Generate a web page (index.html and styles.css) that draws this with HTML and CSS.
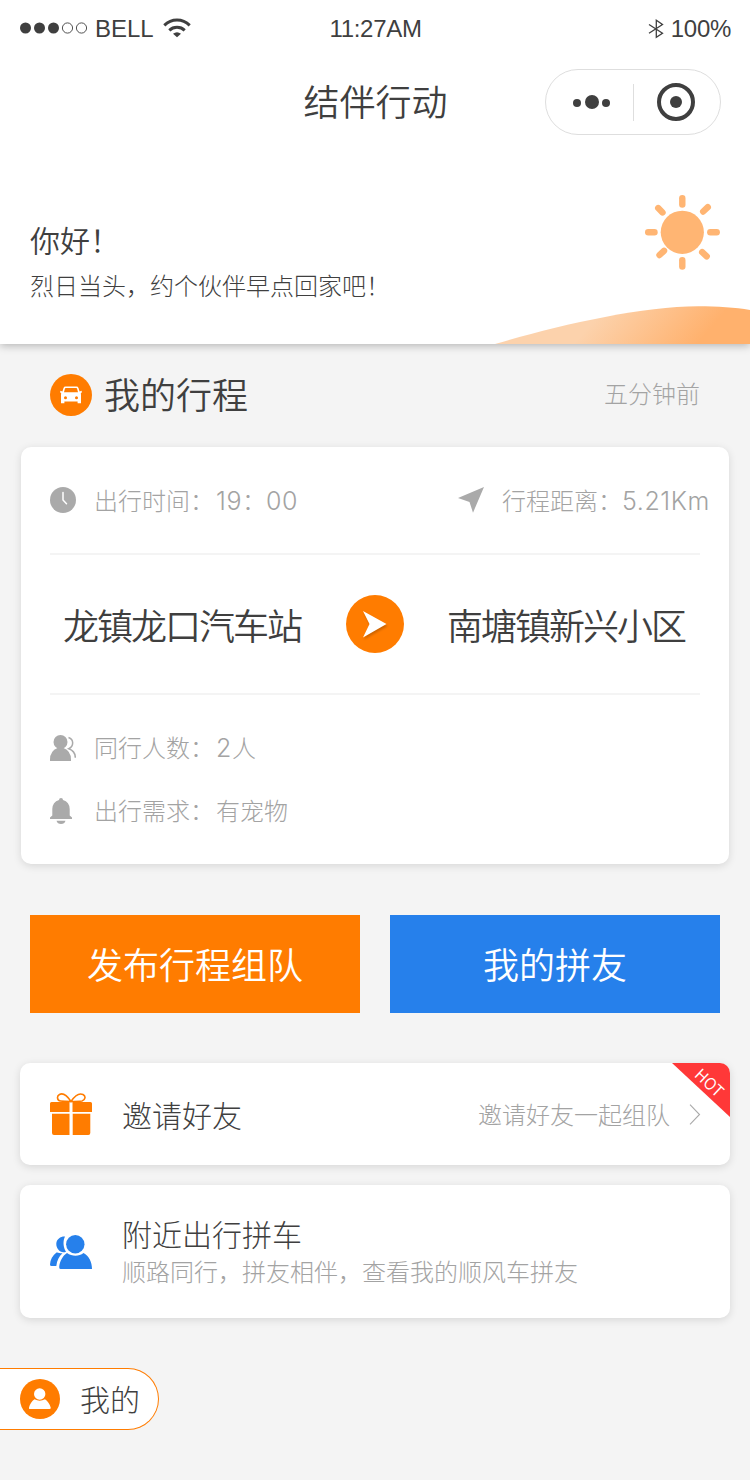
FILE: index.html
```html
<!DOCTYPE html>
<html lang="zh-CN">
<head>
  <meta charset="UTF-8">
  <meta name="viewport" content="width=device-width, initial-scale=1.0">
  <title>结伴行动</title>
  <link rel="stylesheet" href="styles.css">
</head>
<body>

  <!-- Header -->
  <header class="header">
    <div class="status">
      <div class="status-left">
        <svg class="signal" width="68" height="12" viewBox="0 0 68 12" fill="#3f3f3f">
          <circle cx="5.5" cy="6" r="5.5"/>
          <circle cx="19.5" cy="6" r="5.5"/>
          <circle cx="33.5" cy="6" r="5.5"/>
          <circle cx="47.5" cy="6" r="5.1" fill="none" stroke="#3f3f3f" stroke-width=".9"/>
          <circle cx="61.5" cy="6" r="5.1" fill="none" stroke="#3f3f3f" stroke-width=".9"/>
        </svg>
        <span class="carrier">BELL</span>
        <svg class="wifi" width="28" height="20" viewBox="0 0 28 20" fill="none" stroke="#3f3f3f" stroke-width="3">
          <path d="M1.3 7.3C8.5 .3 19.5 .3 26.7 7.3"/>
          <path d="M6.3 12.3C10.5 8.3 17.5 8.3 21.7 12.3"/>
          <path d="M10 15.7Q14 12.7 18 15.7L14 19.3Z" fill="#3f3f3f" stroke="none"/>
        </svg>
      </div>
      <span class="clock">11:27AM</span>
      <div class="status-right">
        <svg width="16" height="20" viewBox="0 0 16 20" fill="none" stroke="#3f3f3f" stroke-width="1.3">
          <path d="M1 5.5L14.5 14.2L8.3 18.3V1.3L14.5 5.5L1 14.3"/>
        </svg>
        <span>100%</span>
      </div>
    </div>

    <div class="nav">
      <h1>结伴行动</h1>
      <div class="capsule">
        <svg width="38" height="16" viewBox="0 0 38 16" fill="#3f3f3f">
          <circle cx="5" cy="9" r="4"/>
          <circle cx="20" cy="8" r="7"/>
          <circle cx="34" cy="9" r="4"/>
        </svg>
        <i class="capsule-line"></i>
        <svg width="38" height="38" viewBox="0 0 38 38">
          <circle cx="19" cy="19" r="17" fill="none" stroke="#3f3f3f" stroke-width="4"/>
          <circle cx="19" cy="19" r="6" fill="#3f3f3f"/>
        </svg>
      </div>
    </div>

    <div class="hello">
      <h2>你好！</h2>
      <p>烈日当头，约个伙伴早点回家吧！</p>
    </div>

    <!-- sun and hill -->
    <svg class="scene" width="260" height="154" viewBox="490 190 260 154">
      <defs>
        <linearGradient id="hill" gradientUnits="userSpaceOnUse" x1="590" y1="325" x2="662" y2="386">
          <stop offset="0" stop-color="#fcd2ac"/>
          <stop offset="1" stop-color="#ffb16d"/>
        </linearGradient>
      </defs>
      <path d="M495 344C556 326 640 306.3 698 306.3C718 306.3 735 307.5 750 310V344Z" fill="url(#hill)"/>
      <circle cx="682.3" cy="232.3" r="21.6" fill="#ffb573"/>
      <g stroke="#ffb573" stroke-width="6.4" stroke-linecap="round">
        <path d="M682.3 198.2V204.5"/>
        <path d="M682.3 260.2V266.6"/>
        <path d="M648.2 232.3H654.5"/>
        <path d="M710.3 232.3H716.7"/>
        <path d="M658.2 208.1L662.5 212.4"/>
        <path d="M707.8 207.2L703.2 211.5"/>
        <path d="M659.5 255L664 250.8"/>
        <path d="M702.2 252.2L706.7 256.3"/>
      </g>
    </svg>
  </header>

  <!-- My trip -->
  <div class="section-head">
    <span class="round car">
      <svg width="22" height="18" viewBox="0 0 22 18">
        <path fill="#fff" fill-rule="evenodd" d="M5.5 .6H16.5Q18 .6 18.5 2L19.6 5.5L21.6 4.7Q22.3 6.8 20.8 7.3L21 9V17.3H17.6V15.6H4.4V17.3H1V9L1.2 7.3Q-.3 6.8 .4 4.7L2.4 5.5L3.5 2Q4 .6 5.5 .6ZM5.7 2.1Q5.1 2.1 4.9 2.7L4 6.3H18L17.1 2.7Q16.9 2.1 16.3 2.1ZM5.5 10.3A1.5 1.5 0 1 0 5.5 13.3A1.5 1.5 0 1 0 5.5 10.3ZM16.5 10.3A1.5 1.5 0 1 0 16.5 13.3A1.5 1.5 0 1 0 16.5 10.3Z"/>
      </svg>
    </span>
    <h2>我的行程</h2>
    <span class="time">五分钟前</span>
  </div>

  <div class="trip">
    <div class="trip-top">
      <div class="info">
        <svg width="26" height="26" viewBox="0 0 26 26">
          <circle cx="13" cy="13" r="13" fill="#aaa"/>
          <path d="M13 5.5V13L16.5 16.7" fill="none" stroke="#fff" stroke-width="1.5" stroke-linecap="round"/>
        </svg>
        <span>出行时间：</span>
        <span class="value"><b>19</b>：<b>00</b></span>
      </div>
      <div class="info">
        <svg width="26" height="26" viewBox="0 0 26 26">
          <path d="M26 0L15 25.7L11.5 15L0 11Z" fill="#aaa"/>
        </svg>
        <span>行程距离：</span>
        <span class="value distance"><b>5.21Km</b></span>
      </div>
    </div>

    <div class="route">
      <span>龙镇龙口汽车站</span>
      <svg class="arrow" width="58" height="58" viewBox="0 0 58 58">
        <circle cx="29" cy="29" r="29" fill="#ff7c00"/>
        <path class="arrow-head" d="M17 16L40.5 29L17 42.5L23.5 29Z" fill="#fff"/>
      </svg>
      <span>南塘镇新兴小区</span>
    </div>

    <div class="trip-bottom">
      <div class="info">
        <svg width="26" height="26" viewBox="0 0 26 26">
          <circle cx="10.5" cy="7" r="7" fill="#aaa"/>
          <path d="M7.5 13H13.5Q21 16 21 24.5V26H0V24.5Q0 16 7.5 13Z" fill="#aaa"/>
          <path d="M18.5 2.5C24 4.5 24 11 18.8 13.7C22.5 15 25.3 18 25.3 22.7" fill="none" stroke="#aaa" stroke-width="1.5"/>
        </svg>
        <span>同行人数：</span>
        <span class="value"><b>2</b>人</span>
      </div>
      <div class="info">
        <svg width="26" height="26" viewBox="0 0 26 26" fill="#aaa">
          <path d="M9 2Q9 0 11 0Q13 0 13 2Q19.5 4 19.7 11V17.5L22 19.5V21H0V19.5L2.3 17.5V11Q2.5 4 9 2Z"/>
          <path d="M6.5 22.7H15.5Q14.5 26 11 26Q7.5 26 6.5 22.7Z"/>
        </svg>
        <span>出行需求：</span>
        <span class="value">有宠物</span>
      </div>
    </div>
  </div>

  <div class="buttons">
    <button class="btn-orange">发布行程组队</button>
    <button class="btn-blue">我的拼友</button>
  </div>

  <!-- Links -->
  <div class="card invite">
    <svg width="42" height="42" viewBox="0 0 42 42">
      <path d="M1.5 9H19.5V19H0V10.5Q0 9 1.5 9ZM22.5 9H40.5Q42 9 42 10.5V19H22.5ZM2 20.7H19.5V42H4Q2 42 2 40ZM22.7 20.7H40.3V40Q40.3 42 38.3 42H22.7Z" fill="#ff7c00"/>
      <path d="M21 8.5C16 1 12 .2 9.5 1.5C6.5 3 7 7.5 10.5 8C14 8.5 18 8.5 21 8.5C24 8.5 29 8.5 32 8C35.5 7 36 3 33 1.5C30 .2 26 1 21 8.5Z" fill="none" stroke="#ff7c00" stroke-width="1.6"/>
    </svg>
    <h3>邀请好友</h3>
    <span class="tip">邀请好友一起组队</span>
    <svg class="more" width="12" height="21" viewBox="0 0 12 21" fill="none" stroke="#aaa" stroke-width="1.1">
      <path d="M1 .7L10.5 10.5L1 20.3"/>
    </svg>
    <div class="hot"><span>HOT</span></div>
  </div>

  <div class="card nearby">
    <svg width="42" height="34" viewBox="0 0 42 34" fill="#2680eb">
      <path d="M15 1.5C12.8 6 13 12 16 16.7C11 19 6 14 6.3 8.5C6.7 4 10.5 1.3 15 1.5Z"/>
      <path d="M6.5 17.5C8 17 10 18.5 12.5 18.3C9 21.5 7 25.5 6.3 31H1.5Q0 31 0 29.5C.3 24.5 2.5 20.5 6.5 17.5Z"/>
      <circle cx="25.3" cy="9.3" r="9.2"/>
      <path d="M17 18C22 21.5 29 21.5 33.5 18C39 21 42 27 42 34H10.5Q9 34 9.2 32C9.8 26 12.5 21 17 18Z"/>
    </svg>
    <div>
      <h3>附近出行拼车</h3>
      <p>顺路同行，拼友相伴，查看我的顺风车拼友</p>
    </div>
  </div>

  <!-- Mine -->
  <div class="mine">
    <span class="round user">
      <svg width="22" height="22" viewBox="0 0 22 22" fill="#fff">
        <circle cx="10.7" cy="6" r="5.7"/>
        <path d="M5.5 11.3Q10.7 14 16 11.3Q20 14 21.7 19.5Q22 21 20.5 21H1Q-.3 21 0 19.5Q1.5 14 5.5 11.3Z"/>
      </svg>
    </span>
    <span>我的</span>
  </div>

</body>
</html>
```
FILE: styles.css
```css
* {
  box-sizing: border-box;
  margin: 0;
  padding: 0;
}

body {
  width: 750px;
  height: 1480px;
  background-color: #f4f4f4;
  color: #3f3f3f;
  font-family: "Noto Sans CJK SC", sans-serif;
  font-weight: 300;
  font-size: 24px;
}

h1, h2, h3 {
  font-weight: 300;
}

svg {
  display: block;
  flex-shrink: 0;
}

/* Header */
.header {
  position: relative;
  height: 344px;
  background-color: #fff;
  box-shadow: 0 2px 8px rgba(0, 0, 0, 0.25);
}

.status {
  display: grid;
  grid-template-columns: 1fr auto 1fr;
  align-items: center;
  height: 56px;
  padding: 2px 19px 0 20px;
  font-family: "Liberation Sans", sans-serif;
  font-weight: 400;
}

.status-left,
.status-right {
  display: flex;
  align-items: center;
}

.status-right {
  justify-content: flex-end;
  gap: 7px;
}

.signal,
.wifi {
  margin-bottom: 2px;
}

.carrier {
  margin: 0 9px 0 7px;
}

.clock,
.status-right span {
  letter-spacing: -0.3px;
}

.nav {
  display: grid;
  grid-template-columns: 1fr auto 1fr;
  align-items: center;
  height: 92px;
  padding: 0 29px 0 30px;
}

.nav h1 {
  grid-column: 2;
  padding-bottom: 4px;
  font-size: 36px;
  font-weight: 350;
  line-height: 54px;
}

.capsule {
  display: flex;
  align-items: center;
  justify-self: end;
  width: 176px;
  height: 66px;
  padding-left: 26px;
  border: 1px solid #dedede;
  border-radius: 33px;
}

.capsule-line {
  width: 1px;
  height: 37px;
  margin: 0 23px;
  background-color: #dedede;
}

.hello {
  padding: 68px 30px 0;
}

.hello h2 {
  font-size: 30px;
  font-weight: 350;
  line-height: 46px;
}

.hello p {
  line-height: 46px;
}

.scene {
  position: absolute;
  right: 0;
  bottom: 0;
}

/* My trip */
.round {
  display: flex;
  align-items: center;
  justify-content: center;
  background-color: #ff7c00;
  border-radius: 50%;
}

.section-head {
  display: flex;
  align-items: center;
  height: 103px;
  padding: 0 50px 2px;
}

.car {
  width: 42px;
  height: 42px;
}

.section-head h2 {
  margin-left: 12px;
  padding-bottom: 3px;
  font-size: 36px;
  font-weight: 350;
}

.time {
  margin-left: auto;
  padding-bottom: 5px;
  color: #a3a3a3;
}

.trip {
  width: 708px;
  height: 417px;
  margin: 0 21px;
  padding: 0 29px;
  background-color: #fff;
  border-radius: 10px;
  box-shadow: 0 2px 8px rgba(0, 0, 0, 0.12);
}

.info {
  display: flex;
  align-items: center;
  color: #a3a3a3;
  white-space: nowrap;
}

.info svg {
  margin-right: 18px;
}

.info span {
  padding-bottom: 2px;
}

.info .value {
  margin-left: 2px;
}

.info .distance {
  margin-left: 0;
}

.info b {
  font-family: Inter, sans-serif;
  font-size: 25px;
  font-weight: 300;
  letter-spacing: 0.6px;
}

.trip-top {
  display: flex;
  justify-content: space-between;
  height: 106px;
  margin-right: -10px;
}

.route {
  display: flex;
  align-items: center;
  justify-content: space-between;
  height: 142px;
  padding: 0 14px;
  border-top: 2px solid #f4f4f4;
  border-bottom: 2px solid #f4f4f4;
  font-size: 36px;
  font-weight: 350;
  letter-spacing: -2px;
}

.route span {
  margin: 0 1px 0 -1px;
}

.arrow-head {
  filter: drop-shadow(1px 2px 1px rgba(0, 0, 0, 0.2));
}

.trip-bottom {
  display: flex;
  flex-direction: column;
  padding-top: 21px;
}

.trip-bottom .info {
  height: 63px;
}

/* Buttons */
.buttons {
  display: flex;
  gap: 30px;
  margin: 51px 30px 50px;
}

.buttons button {
  flex: 1;
  height: 98px;
  padding-bottom: 3px;
  border: none;
  color: #fff;
  font-family: inherit;
  font-size: 36px;
  font-weight: 350;
}

.btn-orange {
  background-color: #ff7c00;
}

.btn-blue {
  background-color: #2680eb;
}

/* Cards */
.card {
  position: relative;
  display: flex;
  align-items: center;
  margin: 0 20px 20px;
  padding: 0 30px;
  background-color: #fff;
  border-radius: 10px;
  box-shadow: 0 2px 8px rgba(0, 0, 0, 0.12);
}

.card h3 {
  font-size: 30px;
  line-height: 38px;
}

.card > h3,
.card > div:not(.hot) {
  margin-left: 30px;
}

.invite {
  height: 102px;
  overflow: hidden;
}

.nearby {
  height: 133px;
}

.nearby p {
  color: #a3a3a3;
  line-height: 38px;
}

.tip {
  margin-left: auto;
  padding-bottom: 2px;
  color: #a3a3a3;
}

.more {
  margin: 0 -1px 0 19px;
}

.hot {
  position: absolute;
  top: 0;
  right: 0;
  width: 58px;
  height: 54px;
  background-color: #ff3838;
  clip-path: polygon(0 0, 100% 0, 100% 100%);
  color: #fff;
}

.hot span {
  position: absolute;
  top: 7px;
  left: 22px;
  font-size: 16px;
  font-weight: 350;
  line-height: 24px;
  transform: rotate(43deg);
}

/* Mine */
.mine {
  display: flex;
  align-items: center;
  gap: 20px;
  width: 159px;
  height: 62px;
  margin-top: 50px;
  padding-left: 20px;
  background-color: #fff;
  border: 1px solid #ff7c00;
  border-left: none;
  border-radius: 0 31px 31px 0;
  font-size: 30px;
}

.mine > span:last-child {
  padding-bottom: 2px;
}

.user {
  width: 40px;
  height: 40px;
}
```
